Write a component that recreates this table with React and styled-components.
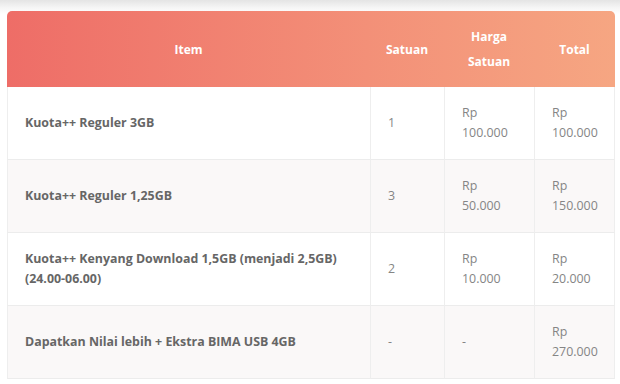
import React from 'react';
import styled, { createGlobalStyle } from 'styled-components';

const GlobalStyle = createGlobalStyle`
  html, body {
    margin: 0;
    padding: 0;
  }
  body {
    background: linear-gradient(180deg, #e4e4e4 0px, #f6f6f6 8px, #ffffff 14px);
    font-family: 'Open Sans', 'Liberation Sans', sans-serif;
    min-height: 384px;
  }
`;

const Page = styled.div`
  padding: 11px 5px 0 7px;
`;

const Table = styled.table`
  width: 608px;
  border-collapse: separate;
  border-spacing: 0;
  table-layout: fixed;
  font-size: 12.4px;
`;

const HeadCell = styled.th`
  height: 76px;
  padding: 0 8px;
  box-sizing: border-box;
  color: #fff;
  font-size: 12px;
  font-weight: 700;
  line-height: 25px;
  text-align: center;
  vertical-align: middle;
  background: linear-gradient(90deg, #ee6d67 0px, #f39078 360px, #f6a682 608px);
  background-size: 608px 100%;
  background-position: ${p => -p.$offset}px 0;

  &:first-child { border-top-left-radius: 5px; }
  &:last-child { border-top-right-radius: 5px; }
`;

const Row = styled.tr`
  background: ${p => (p.$alt ? '#faf8f8' : '#ffffff')};
`;

const Cell = styled.td`
  padding: 16px 17px;
  line-height: 20px;
  vertical-align: middle;
  color: ${p => (p.$strong ? '#666666' : '#858585')};
  font-weight: ${p => (p.$strong ? 700 : 400)};
  border-bottom: 1px solid #ececec;
  border-left: 1px solid #eeeeee;

  &:last-child { border-right: 1px solid #eeeeee; }
`;

const cols = [
  { label: 'Item', width: 363 },
  { label: 'Satuan', width: 74 },
  { label: 'Harga Satuan', width: 90 },
  { label: 'Total', width: 81 },
];

const rows = [
  { item: 'Kuota++ Reguler 3GB', qty: '1', price: '100.000', total: '100.000' },
  { item: 'Kuota++ Reguler 1,25GB', qty: '3', price: '50.000', total: '150.000' },
  { item: 'Kuota++ Kenyang Download 1,5GB (menjadi 2,5GB) (24.00-06.00)', qty: '2', price: '10.000', total: '20.000' },
  { item: 'Dapatkan Nilai lebih + Ekstra BIMA USB 4GB', qty: '-', price: null, total: '270.000' },
];

function Money({ value }) {
  if (value === null) return '-';
  return (
    <>
      Rp
      <br />
      {value}
    </>
  );
}

export default function App() {
  let offset = 0;
  return (
    <Page>
      <GlobalStyle />
      <Table>
        <colgroup>
          {cols.map(c => (
            <col key={c.label} style={{ width: c.width }} />
          ))}
        </colgroup>
        <thead>
          <tr>
            {cols.map(c => {
              const o = offset;
              offset += c.width;
              return (
                <HeadCell key={c.label} $offset={o}>
                  {c.label === 'Harga Satuan' ? (
                    <>
                      Harga
                      <br />
                      Satuan
                    </>
                  ) : (
                    c.label
                  )}
                </HeadCell>
              );
            })}
          </tr>
        </thead>
        <tbody>
          {rows.map((r, i) => (
            <Row key={r.item} $alt={i % 2 === 1}>
              <Cell $strong>{r.item}</Cell>
              <Cell>{r.qty}</Cell>
              <Cell>
                <Money value={r.price} />
              </Cell>
              <Cell>
                <Money value={r.total} />
              </Cell>
            </Row>
          ))}
        </tbody>
      </Table>
    </Page>
  );
}
